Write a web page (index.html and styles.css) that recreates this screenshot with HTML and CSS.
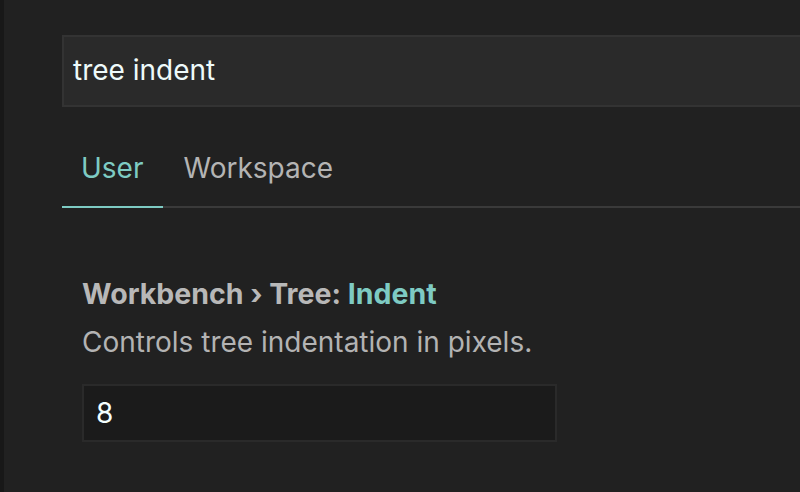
FILE: index.html
```html
<!DOCTYPE html>
<html>
<head>
<meta charset="utf-8">
<link rel="stylesheet" href="styles.css">
</head>
<body>
<div class="app">
  <div class="sidebar-edge"></div>
  <main class="editor">
    <div class="search">
      <span class="search-text">tree indent</span>
    </div>
    <div class="tabs">
      <div class="tab active">User</div>
      <div class="tab">Workspace</div>
    </div>
    <section class="setting">
      <div class="setting-title">Workbench › Tree: <span class="key">Indent</span></div>
      <div class="setting-desc">Controls tree indentation in pixels.</div>
      <div class="setting-input">8</div>
    </section>
  </main>
</div>
</body>
</html>
```

FILE: styles.css
```css
html, body {
  margin: 0;
  padding: 0;
  height: 100%;
  background: #212121;
  font-family: Inter, "Noto Sans", sans-serif;
}
.app {
  display: flex;
  height: 492px;
  overflow: hidden;
}
.sidebar-edge {
  width: 4px;
  flex: none;
  background: #181818;
}
.editor {
  flex: 1;
  padding-left: 58px;
  overflow: hidden;
}
.search {
  margin-top: 35px;
  width: calc(100% + 40px);
  height: 68px;
  box-sizing: content-box;
  border: 2px solid #333333;
  background: #2a2a2a;
  display: flex;
  align-items: center;
  padding-left: 9px;
}
.search-text {
  color: #eefafa;
  font-size: 28px;
  margin-top: -2px;
}
.tabs {
  display: flex;
  height: 99px;
  border-bottom: 2px solid #3a3a3a;
  align-items: flex-end;
}
.tab {
  font-size: 28px;
  color: #b4b4b4;
  padding: 0 20px 21px;
  margin-bottom: -2px;
  border-bottom: 2px solid transparent;
}
.tab.active {
  color: #7ecbc3;
  border-bottom-color: #7ecbc3;
  padding-left: 19px;
}
.setting {
  padding: 70px 0 0 20px;
}
.setting-title {
  font-size: 28.5px;
  font-weight: 700;
  color: #b8b8b8;
  line-height: 32px;
}
.key {
  color: #7ecbc3;
}
.setting-desc {
  font-size: 28px;
  color: #b3b3b3;
  line-height: 32px;
  margin-top: 16px;
}
.setting-input {
  margin-top: 26px;
  width: 459px;
  height: 54px;
  border: 2px solid #2a2a2a;
  background: #1b1b1b;
  color: #f4ffff;
  font-size: 28px;
  display: flex;
  align-items: center;
  padding-left: 12px;
  box-sizing: content-box;
}
```
